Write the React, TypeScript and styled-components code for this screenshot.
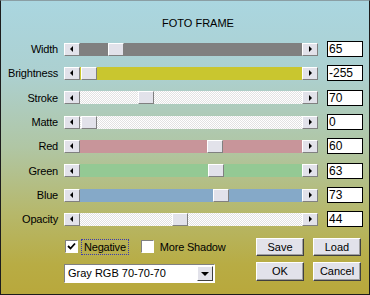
import { Fragment } from 'react'
import styled, { createGlobalStyle } from 'styled-components'

const GlobalStyle = createGlobalStyle`
  html, body {
    margin: 0;
    padding: 0;
  }
  body {
    font-family: "Liberation Sans", Arial, sans-serif;
    font-size: 11px;
    color: #000;
  }
`

const Panel = styled.div`
  box-sizing: border-box;
  width: 370px;
  height: 295px;
  border: 1px solid #1c1c1c;
  border-top-color: #8a9ea4;
  background: linear-gradient(
    180deg,
    #aad6e0 0%,
    #acd0d0 25%,
    #b0c6a4 50%,
    #b6b86c 72%,
    #b8ac44 90%,
    #b8a83c 100%
  );
  display: flex;
  flex-direction: column;
`

const Title = styled.div`
  height: 13px;
  line-height: 13px;
  margin-top: 16px;
  padding-left: 161px;
  font-size: 11px;
`

const SliderGrid = styled.div`
  margin-top: 7px;
  display: grid;
  grid-template-columns: 57px 254px 36px;
  grid-auto-rows: 24.33px;
  column-gap: 6px;
  align-items: center;
`

const Label = styled.div`
  text-align: right;
  font-size: 11px;
  letter-spacing: -0.2px;
`

const ScrollBar = styled.div`
  display: flex;
  height: 13px;
`

const ArrowButton = styled.div<{ $dir: 'left' | 'right' }>`
  box-sizing: border-box;
  width: 16px;
  height: 13px;
  flex: none;
  background: #e2e2ea;
  border-top: 1px solid #fff;
  border-left: 1px solid #fff;
  border-right: 1px solid #808080;
  border-bottom: 1px solid #808080;
  display: flex;
  align-items: center;
  justify-content: center;

  &::after {
    content: '';
    width: 0;
    height: 0;
    border-top: 3px solid transparent;
    border-bottom: 3px solid transparent;
    ${(p) =>
      p.$dir === 'left'
        ? 'border-right: 3px solid #000; margin-right: 1px;'
        : 'border-left: 3px solid #000; margin-left: 1px;'}
  }
`

const checker = 'repeating-conic-gradient(#ffffff 0 25%, #e2e2e2 0 50%) 0 0 / 2px 2px'

const Track = styled.div<{ $fill: string }>`
  position: relative;
  flex: 1;
  background: ${(p) => (p.$fill === 'checker' ? checker : p.$fill)};
`

const Thumb = styled.div`
  position: absolute;
  top: 0;
  box-sizing: border-box;
  width: 16px;
  height: 13px;
  background: #e2e2ea;
  border-top: 1px solid #fff;
  border-left: 1px solid #fff;
  border-right: 1px solid #808080;
  border-bottom: 1px solid #808080;
`

const ValueBox = styled.div`
  box-sizing: border-box;
  margin-left: 3px;
  width: 36px;
  height: 16px;
  background: #fff;
  border: 1px solid #000;
  font-size: 12px;
  line-height: 14px;
  padding-left: 1px;
`

const Footer = styled.div`
  margin-top: 6px;
  margin-left: 63px;
  display: grid;
  grid-template-columns: 1fr auto;
  grid-template-rows: 18px 19px;
  row-gap: 6px;
  padding-right: 8px;
`

const CheckRow = styled.div`
  display: flex;
  align-items: center;
  padding-left: 1px;
`

const CheckItem = styled.label<{ $gap: number }>`
  display: flex;
  align-items: center;
  margin-right: ${(p) => p.$gap}px;
`

const CheckBox = styled.span`
  box-sizing: border-box;
  width: 13px;
  height: 13px;
  background: #fff;
  border-top: 1px solid #808080;
  border-left: 1px solid #808080;
  border-right: 1px solid #fff;
  border-bottom: 1px solid #fff;
  display: flex;
  align-items: center;
  justify-content: center;
`

const CheckText = styled.span<{ $focus?: boolean }>`
  margin-left: 3px;
  padding: 1px 2px;
  font-size: 11px;
  letter-spacing: -0.2px;
  border: 1px dotted ${(p) => (p.$focus ? '#3a3ab0' : 'transparent')};
`

const ButtonPair = styled.div`
  display: flex;
  gap: 9px;
`

const PushButton = styled.button`
  box-sizing: border-box;
  width: 48px;
  height: 100%;
  padding: 0;
  margin: 0;
  background: #e2e2ea;
  font-family: "Liberation Sans", Arial, sans-serif;
  font-size: 11px;
  color: #000;
  border-top: 1px solid #fff;
  border-left: 1px solid #fff;
  border-right: 1px solid #404040;
  border-bottom: 1px solid #404040;
  box-shadow: inset -1px -1px 0 #a0a0a0;
`

const Select = styled.div`
  box-sizing: border-box;
  width: 151px;
  height: 19px;
  margin-top: 2px;
  background: #fff;
  border-top: 1px solid #808080;
  border-left: 1px solid #808080;
  border-right: 1px solid #fff;
  border-bottom: 1px solid #fff;
  display: flex;
  align-items: center;
  justify-content: space-between;
  padding: 0 1px 0 3px;
  font-size: 11px;
`

const SelectArrow = styled.div`
  box-sizing: border-box;
  width: 16px;
  height: 15px;
  background: #e2e2ea;
  border-top: 1px solid #fff;
  border-left: 1px solid #fff;
  border-right: 1px solid #404040;
  border-bottom: 1px solid #404040;
  display: flex;
  align-items: center;
  justify-content: center;

  &::after {
    content: '';
    border-left: 4px solid transparent;
    border-right: 4px solid transparent;
    border-top: 4px solid #000;
    margin-top: 1px;
  }
`

const sliders = [
  { label: 'Width', fill: '#808080', pos: 28, value: '65' },
  { label: 'Brightness', fill: '#c9c62f', pos: 1, value: '-255' },
  { label: 'Stroke', fill: 'checker', pos: 58, value: '70' },
  { label: 'Matte', fill: 'checker', pos: 1, value: '0' },
  { label: 'Red', fill: '#c8959a', pos: 127, value: '60' },
  { label: 'Green', fill: '#94c994', pos: 128, value: '63' },
  { label: 'Blue', fill: '#85a9c8', pos: 133, value: '73' },
  { label: 'Opacity', fill: 'checker', pos: 92, value: '44' },
]

export default function App() {
  return (
    <>
      <GlobalStyle />
      <Panel>
        <Title>FOTO FRAME</Title>
        <SliderGrid>
          {sliders.map((s) => (
            <Fragment key={s.label}>
              <Label>{s.label}</Label>
              <ScrollBar>
                <ArrowButton $dir="left" />
                <Track $fill={s.fill}>
                  <Thumb style={{ left: s.pos }} />
                </Track>
                <ArrowButton $dir="right" />
              </ScrollBar>
              <ValueBox>{s.value}</ValueBox>
            </Fragment>
          ))}
        </SliderGrid>
        <Footer>
          <CheckRow>
            <CheckItem $gap={12}>
              <CheckBox>
                <svg width="9" height="9" viewBox="0 0 9 9">
                  <path d="M1 4 L3.5 6.5 L8 1.5" stroke="#000" strokeWidth="1.8" fill="none" />
                </svg>
              </CheckBox>
              <CheckText $focus>Negative</CheckText>
            </CheckItem>
            <CheckItem $gap={0}>
              <CheckBox />
              <CheckText>More Shadow</CheckText>
            </CheckItem>
          </CheckRow>
          <ButtonPair>
            <PushButton>Save</PushButton>
            <PushButton>Load</PushButton>
          </ButtonPair>
          <Select>
            <span>Gray RGB 70-70-70</span>
            <SelectArrow />
          </Select>
          <ButtonPair>
            <PushButton>OK</PushButton>
            <PushButton>Cancel</PushButton>
          </ButtonPair>
        </Footer>
      </Panel>
    </>
  )
}
